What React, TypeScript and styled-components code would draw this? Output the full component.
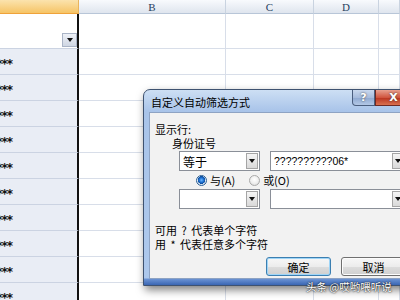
import React from 'react';
import styled, { createGlobalStyle } from 'styled-components';

const GlobalStyle = createGlobalStyle`
  html, body { margin: 0; padding: 0; width: 400px; height: 300px; overflow: hidden; background: #fff; }
  * { box-sizing: border-box; }
`;

const CJK = `"Noto Sans CJK SC", "Noto Sans", sans-serif`;

const Page = styled.div`
  position: relative;
  width: 400px;
  height: 300px;
  overflow: hidden;
  background: #fff;
  font-family: ${CJK};
`;

const Sheet = styled.div`
  display: grid;
  grid-template-columns: 79px 147px 88px 65px 21px;
  grid-template-rows: 14px 35px repeat(10, 26px);
`;

const ColHead = styled.div<{ $sel?: boolean }>`
  display: flex;
  align-items: center;
  justify-content: center;
  font: 11px "Liberation Serif", serif;
  color: #27415f;
  background: ${p => (p.$sel ? 'linear-gradient(#fbe3ad, #f6c466)' : 'linear-gradient(#f8fafd, #dfe5ee)')};
  border-right: 1px solid ${p => (p.$sel ? '#e9b45c' : '#c9d3e0')};
  border-bottom: 1px solid ${p => (p.$sel ? '#efa23a' : '#b8c6d8')};
`;

const ACell = styled.div<{ $top?: boolean }>`
  display: flex;
  align-items: ${p => (p.$top ? 'flex-end' : 'center')};
  justify-content: ${p => (p.$top ? 'flex-end' : 'flex-start')};
  overflow: hidden;
  background: ${p => (p.$top ? '#fff' : '#e9edf5')};
  border-right: 2px solid #111;
  border-bottom: 1px solid #cbd3e2;
  padding-bottom: ${p => (p.$top ? '1px' : '0')};
`;

const Stars = styled.span`
  margin-left: -9px;
  padding-top: 5px;
  font: bold 12px "DejaVu Sans", sans-serif;
  color: #111;
  letter-spacing: -1px;
  white-space: nowrap;
`;

const FilterBtn = styled.div`
  width: 15px;
  height: 14px;
  display: flex;
  align-items: center;
  justify-content: center;
  background: linear-gradient(#eef1f7, #cfd6e3);
  border: 1px solid #aab4c6;
`;

const Tri = styled.span<{ $size?: number }>`
  width: 0;
  height: 0;
  border-left: ${p => p.$size ?? 3}px solid transparent;
  border-right: ${p => p.$size ?? 3}px solid transparent;
  border-top: ${p => (p.$size ?? 3) + 1}px solid #111;
`;

const Cell = styled.div`
  background: #fff;
  border-right: 1px solid #d8dee9;
  border-bottom: 1px solid #d8dee9;
`;

const Dialog = styled.div`
  position: absolute;
  left: 143px;
  top: 89px;
  width: 275px;
  height: 197px;
  border: 1px solid #3e5270;
  border-radius: 7px 7px 0 0;
  background: linear-gradient(
    to bottom,
    #cddff4 0px,
    #a9c4e9 21px,
    #adc8ec calc(100% - 7px),
    #6b93d4 calc(100% - 6px),
    #3a66b3 100%
  );
  box-shadow: 2px 4px 8px rgba(0, 0, 0, 0.5);
  padding: 0 5px 6px 5px;
  display: flex;
  flex-direction: column;
`;

const TitleBar = styled.div`
  height: 22px;
  display: flex;
  align-items: center;
`;

const Title = styled.div`
  flex: 1;
  font-size: 11px;
  color: #000;
  padding-left: 2px;
  padding-top: 1px;
`;

const CapBtn = styled.div<{ $close?: boolean }>`
  align-self: flex-start;
  width: ${p => (p.$close ? 37 : 23)}px;
  height: 16px;
  display: flex;
  align-items: center;
  justify-content: center;
  font: bold 11px "DejaVu Sans", sans-serif;
  color: #fff;
  text-shadow: 0 0 2px #333;
  border: 1px solid ${p => (p.$close ? '#6e2a24' : '#4a5e7e')};
  border-top: none;
  border-radius: ${p => (p.$close ? '0 0 4px 0' : '0 0 0 4px')};
  background: ${p =>
    p.$close
      ? 'linear-gradient(#e8a08f, #d0553f 50%, #b9331f 51%, #d9704f)'
      : 'linear-gradient(#c9d8ee, #a7bcdc 50%, #8ea8d0 51%, #b3c8e6)'};
`;

const Client = styled.div`
  flex: 1;
  background: #f2f2f2;
  border: 1px solid #8ea3c3;
  display: flex;
  flex-direction: column;
  font-size: 11px;
  color: #000;
`;

const Label = styled.div<{ $indent: number; $gap: number }>`
  height: 14px;
  line-height: 14px;
  margin-top: ${p => p.$gap}px;
  padding-left: ${p => p.$indent}px;
  white-space: pre;
  word-spacing: 2px;
`;

const Row = styled.div<{ $gap?: number; $indent: number; $h: number }>`
  display: flex;
  align-items: center;
  height: ${p => p.$h}px;
  margin-top: ${p => p.$gap ?? 0}px;
  padding-left: ${p => p.$indent}px;
  gap: 10px;
`;

const Combo = styled.div<{ $w: number }>`
  width: ${p => p.$w}px;
  height: 20px;
  flex-shrink: 0;
  display: flex;
  align-items: stretch;
  background: #fff;
  border: 1px solid #8a8f98;
`;

const ComboText = styled.div<{ $latin?: boolean }>`
  flex: 1;
  display: flex;
  align-items: center;
  padding-left: 3px;
  font-size: ${p => (p.$latin ? '10.5px' : '12px')};
  font-family: ${p => (p.$latin ? '"Liberation Sans", sans-serif' : CJK)};
  white-space: nowrap;
  overflow: hidden;
`;

const ComboBtn = styled.div`
  width: 12px;
  margin: 1px;
  display: flex;
  align-items: center;
  justify-content: center;
  background: linear-gradient(#f5f5f5, #d9d9d9);
  border: 1px solid #a5a5a5;
`;

const RadioItem = styled.div<{ $ml: number }>`
  display: flex;
  align-items: center;
  gap: 3px;
  margin-left: ${p => p.$ml}px;
  white-space: nowrap;
`;

const RadioDot = styled.span<{ $on?: boolean }>`
  width: 11px;
  height: 11px;
  border-radius: 50%;
  border: 1px solid ${p => (p.$on ? '#2b5f94' : '#a9a9a9')};
  background: ${p =>
    p.$on
      ? 'radial-gradient(circle at 50% 45%, #6fb8ff 0, #1a6ed0 35%, #0f4c9a 55%, #dfe9f5 60%, #c9d5e3 100%)'
      : 'radial-gradient(circle at 50% 40%, #ffffff 0, #eeeeee 55%, #d0d0d0 100%)'};
`;

const Button = styled.div<{ $focus?: boolean }>`
  width: 65px;
  height: 19px;
  flex-shrink: 0;
  display: flex;
  align-items: center;
  justify-content: center;
  font-size: 11px;
  border: 1px solid ${p => (p.$focus ? '#3c7fb1' : '#707070')};
  border-radius: 3px;
  background: linear-gradient(#f7f7f7, #ececec 50%, #dddddd 51%, #cfcfcf);
  box-shadow: ${p => (p.$focus ? 'inset 0 0 0 1px #9fd5f7' : 'inset 0 0 0 1px #fcfcfc')};
`;

const Watermark = styled.div`
  position: absolute;
  left: 306px;
  top: 279px;
  font-size: 10.5px;
  color: #fff;
  text-shadow: 0 0 2px #222, 0 0 1px #222;
  white-space: nowrap;
`;

const dataRows = Array.from({ length: 10 });

export default function App() {
  return (
    <Page>
      <GlobalStyle />
      <Sheet>
        <ColHead $sel />
        <ColHead>B</ColHead>
        <ColHead>C</ColHead>
        <ColHead>D</ColHead>
        <ColHead />
        <ACell $top>
          <FilterBtn>
            <Tri $size={3} />
          </FilterBtn>
        </ACell>
        <Cell />
        <Cell />
        <Cell />
        <Cell />
        {dataRows.map((_, i) => (
          <React.Fragment key={i}>
            <ACell>
              <Stars>****</Stars>
            </ACell>
            <Cell />
            <Cell />
            <Cell />
            <Cell />
          </React.Fragment>
        ))}
      </Sheet>

      <Dialog>
        <TitleBar>
          <Title>自定义自动筛选方式</Title>
          <CapBtn>?</CapBtn>
          <CapBtn $close>X</CapBtn>
        </TitleBar>
        <Client>
          <Label $indent={5} $gap={9}>显示行:</Label>
          <Label $indent={22} $gap={0}>身份证号</Label>
          <Row $indent={29} $h={20} $gap={1}>
            <Combo $w={81}>
              <ComboText>等于</ComboText>
              <ComboBtn>
                <Tri $size={3} />
              </ComboBtn>
            </Combo>
            <Combo $w={136}>
              <ComboText $latin>??????????06*</ComboText>
              <ComboBtn>
                <Tri $size={3} />
              </ComboBtn>
            </Combo>
          </Row>
          <Row $indent={0} $h={18}>
            <RadioItem $ml={46}>
              <RadioDot $on />
              <span>与(A)</span>
            </RadioItem>
            <RadioItem $ml={4}>
              <RadioDot />
              <span>或(O)</span>
            </RadioItem>
          </Row>
          <Row $indent={29} $h={20}>
            <Combo $w={81}>
              <ComboText />
              <ComboBtn>
                <Tri $size={3} />
              </ComboBtn>
            </Combo>
            <Combo $w={136}>
              <ComboText $latin />
              <ComboBtn>
                <Tri $size={3} />
              </ComboBtn>
            </Combo>
          </Row>
          <Label $indent={5} $gap={14}>可用 ? 代表单个字符</Label>
          <Label $indent={5} $gap={0}>用 * 代表任意多个字符</Label>
          <Row $indent={116} $h={19} $gap={6}>
            <Button $focus>确定</Button>
            <Button>取消</Button>
          </Row>
        </Client>
      </Dialog>
      <Watermark>头条 @哎哟喂听说</Watermark>
    </Page>
  );
}
